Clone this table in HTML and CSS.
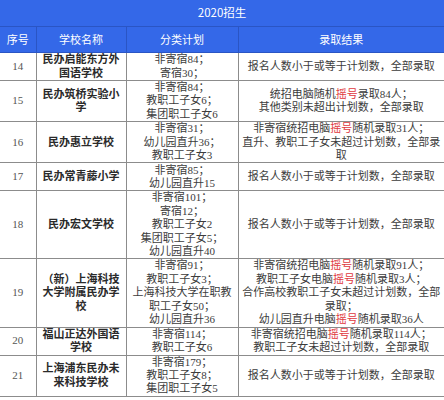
FILE: index.html
```html
<!DOCTYPE html>
<html lang="zh">
<head>
<meta charset="utf-8">
<link rel="stylesheet" href="styles.css">
</head>
<body>
<table class="tbl">
  <colgroup>
    <col class="c1"><col class="c2"><col class="c3"><col class="c4">
  </colgroup>
  <thead>
    <tr class="title"><th colspan="4">2020招生</th></tr>
    <tr class="head"><th>序号</th><th>学校名称</th><th>分类计划</th><th>录取结果</th></tr>
  </thead>
  <tbody>
    <tr><td class="num">14</td><td class="name">民办启能东方外<br>国语学校</td><td>非寄宿84；<br>寄宿30；</td><td>报名人数小于或等于计划数，全部录取</td></tr>
    <tr><td class="num">15</td><td class="name">民办筑桥实验小<br>学</td><td>非寄宿84；<br>教职工子女6；<br>集团职工子女6</td><td>统招电脑随机<span class="red">摇号</span>录取84人；<br>其他类别未超出计划数，全部录取</td></tr>
    <tr><td class="num">16</td><td class="name">民办惠立学校</td><td>非寄宿31；<br>幼儿园直升36；<br>教职工子女3</td><td>非寄宿统招电脑<span class="red">摇号</span>随机录取31人；<br>直升、教职工子女未超过计划数，全部录<br>取</td></tr>
    <tr><td class="num">17</td><td class="name">民办常青藤小学</td><td>非寄宿85；<br>幼儿园直升15</td><td>报名人数小于或等于计划数，全部录取</td></tr>
    <tr><td class="num">18</td><td class="name">民办宏文学校</td><td>非寄宿101；<br>寄宿12；<br>教职工子女2<br>集团职工子女5；<br>幼儿园直升40</td><td>报名人数小于或等于计划数，全部录取</td></tr>
    <tr><td class="num">19</td><td class="name">（新）上海科技<br>大学附属民办学<br>校</td><td>非寄宿91；<br>教职工子女3；<br>上海科技大学在职教<br>职工子女50；<br>幼儿园直升36</td><td>非寄宿统招电脑<span class="red">摇号</span>随机录取91人；<br>教职工子女电脑<span class="red">摇号</span>随机录取3人；<br>合作高校教职工子女未超过计划数，全部<br>录取；<br>幼儿园直升电脑<span class="red">摇号</span>随机录取36人</td></tr>
    <tr><td class="num">20</td><td class="name">福山正达外国语<br>学校</td><td>非寄宿114；<br>教职工子女6</td><td>非寄宿统招电脑<span class="red">摇号</span>随机录取114人；<br>教职工子女未超过计划数，全部录取</td></tr>
    <tr><td class="num">21</td><td class="name">上海浦东民办未<br>来科技学校</td><td>非寄宿179；<br>教职工子女8；<br>集团职工子女5</td><td>报名人数小于或等于计划数，全部录取</td></tr>
  </tbody>
</table>
</body>
</html>
```
FILE: styles.css
```css
html, body {
  margin: 0;
  padding: 0;
  background: #ffffff;
}
.tbl {
  width: 444px;
  border-collapse: collapse;
  table-layout: fixed;
  font-family: "Liberation Serif", "Noto Sans CJK SC", serif;
  font-size: 11px;
  line-height: 13.4px;
  color: #3c3c3c;
}
.c1 { width: 36px; }
.c2 { width: 90px; }
.c3 { width: 112px; }
.c4 { width: 206px; }
.tbl th {
  background: #3468e8;
  color: #ffffff;
  font-weight: normal;
  font-family: "Noto Sans CJK SC", sans-serif;
  border: 1px solid #2a55c4;
  padding: 0;
}
.title th {
  height: 26px;
  font-size: 11.5px;
  border-top: none;
  border-left: none;
  border-right: none;
}
.head th {
  height: 25px;
  font-size: 11px;
}
.head th:first-child { border-left: none; }
.head th:last-child { border-right: none; }
.tbl td {
  border: 1px solid #8c8c8c;
  padding: 0;
  text-align: center;
  vertical-align: middle;
  white-space: nowrap;
  overflow: hidden;
}
.tbl td:first-child { border-left: none; }
.tbl td:last-child { border-right: none; }
.tbl tbody tr { height: 28px; }
.num {
  color: #555;
}
.name {
  font-weight: bold;
  color: #2a2a2a;
  font-size: 11px;
}
.red {
  color: #e0383e;
}
```
